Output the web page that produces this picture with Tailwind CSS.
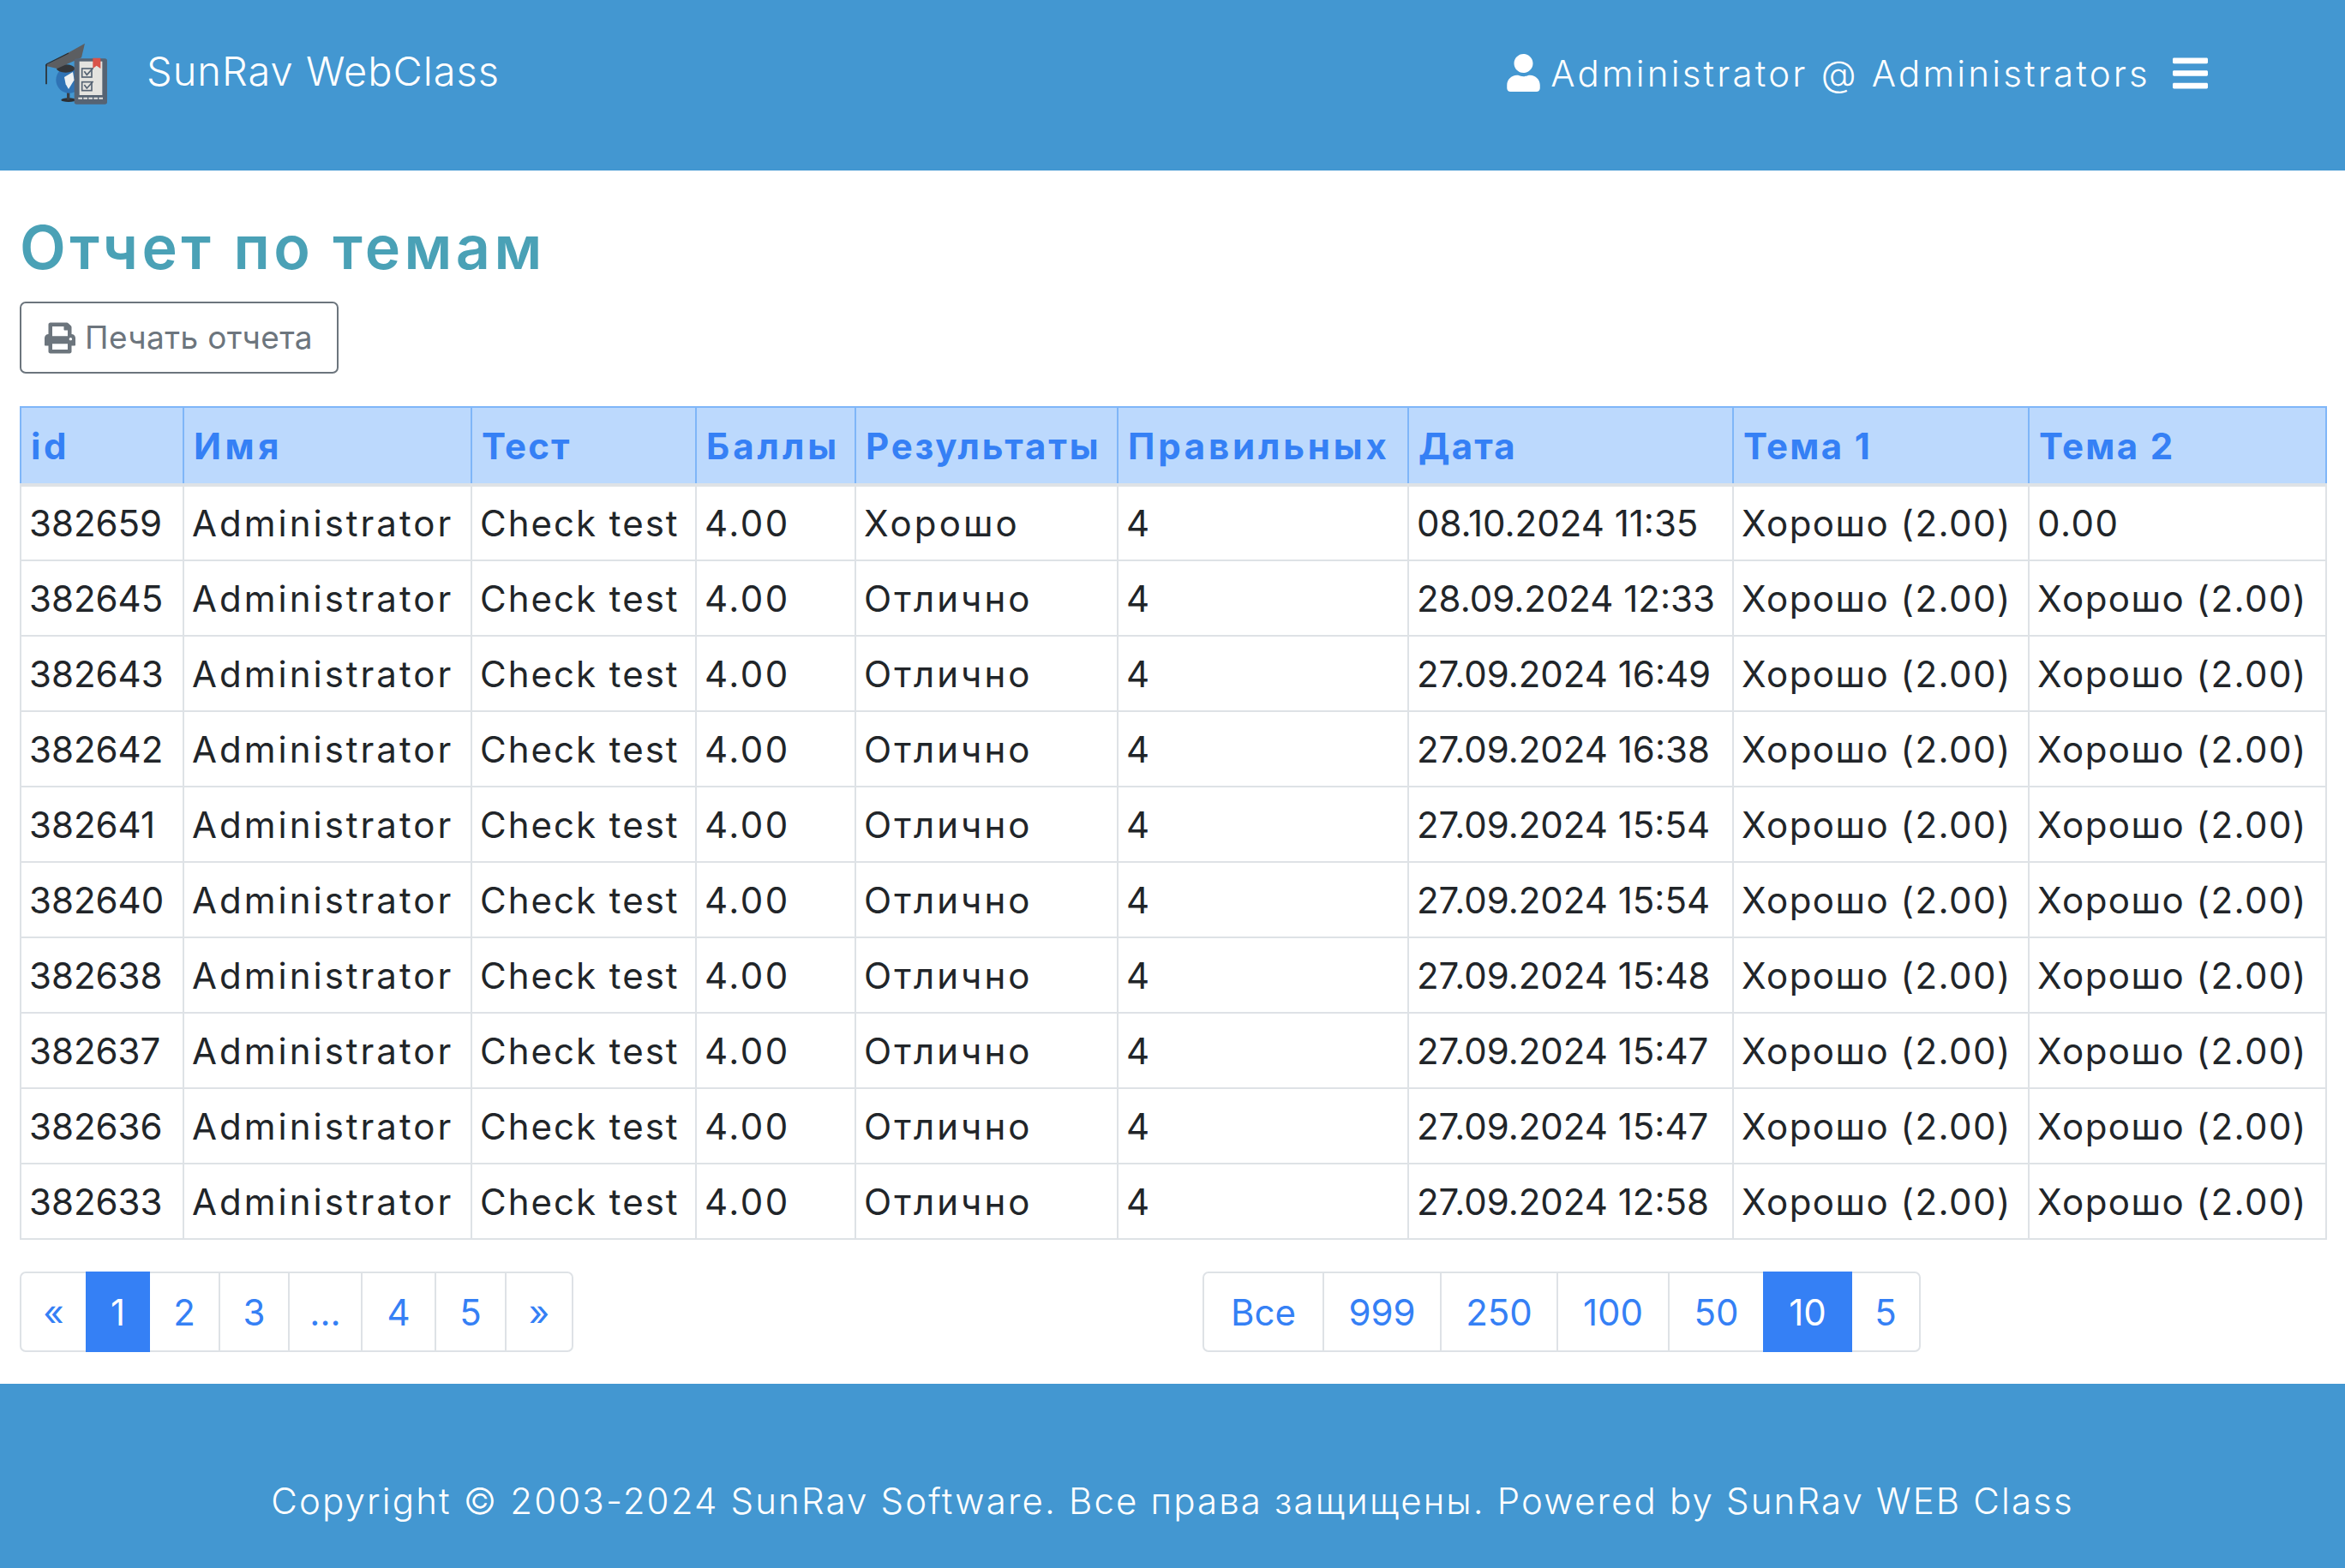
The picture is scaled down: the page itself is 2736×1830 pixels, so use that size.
<!DOCTYPE html>
<html lang="ru"><head><meta charset="utf-8"><title>Отчет по темам</title>
<script src="https://cdn.jsdelivr.net/npm/@tailwindcss/browser@4"></script></head>
<body class="font-['Inter',sans-serif] bg-white text-[#212529] text-[42px]">
<header class="h-[199px] bg-[#4397d1] text-white"><div class="h-[170px] flex items-center pl-[30px] pr-[160px]">
<svg width="120" height="110" viewBox="0 0 360 330"><ellipse cx="150" cy="260" rx="26" ry="7" fill="#2c2f33"/><rect x="144" y="232" width="10" height="28" fill="#3a3f45"/><circle cx="152" cy="190" r="46" fill="#2f73b5"/><path d="M135 180 L165 162 L170 190 L150 222 L140 205 Z" fill="#eef1f2"/><ellipse cx="140" cy="150" rx="32" ry="14" fill="#33363a"/><path d="M68 140 L207 62 L195 112 L110 150 Z" fill="#5c5e61"/><path d="M72 135 L150 96" stroke="#2b2d30" stroke-width="4" fill="none"/><path d="M72 135 V205" stroke="#2b2d30" stroke-width="5"/><rect x="170" y="115" width="115" height="160" rx="8" fill="#566373"/><rect x="188" y="125" width="80" height="118" fill="#e4e3df"/><path d="M235 113 H262 V150 L248 140 L235 150 Z" fill="#d9534a"/><rect x="197" y="150" width="34" height="30" fill="none" stroke="#566373" stroke-width="5"/><path d="M205 160 L214 172 L236 148" fill="none" stroke="#566373" stroke-width="5"/><rect x="197" y="197" width="34" height="30" fill="none" stroke="#566373" stroke-width="5"/><path d="M205 207 L214 219 L236 195" fill="none" stroke="#566373" stroke-width="5"/><path d="M184 254 H198 M202 254 H216 M220 254 H234 M238 254 H252 M256 254 H270" stroke="#e4e3df" stroke-width="6"/></svg>
<span class="ml-[21px] -mt-[3px] text-[47px] font-light tracking-[1px]">SunRav WebClass</span>
<div class="ml-auto flex items-center">
<svg width="39" height="44" viewBox="0 0 448 512" fill="currentColor"><path d="M224 256c70.7 0 128-57.3 128-128S294.7 0 224 0 96 57.3 96 128s57.3 128 128 128zm89.6 32h-16.7c-22.2 10.2-46.9 16-72.9 16s-50.6-5.8-72.9-16h-16.7C60.2 288 0 348.2 0 422.4V464c0 26.5 21.5 48 48 48h352c26.5 0 48-21.5 48-48v-41.6c0-74.2-60.2-134.4-134.4-134.4z"/></svg>
<span class="ml-[12px] font-light tracking-[3.2px]">Administrator @ Administrators</span>
<svg class="ml-[26px]" width="41" height="47" viewBox="0 0 448 512" fill="currentColor"><path d="M16 132h416c8.837 0 16-7.163 16-16V76c0-8.837-7.163-16-16-16H16C7.163 60 0 67.163 0 76v40c0 8.837 7.163 16 16 16zm0 160h416c8.837 0 16-7.163 16-16v-40c0-8.837-7.163-16-16-16H16c-8.837 0-16 7.163-16 16v40c0 8.837 7.163 16 16 16zm0 160h416c8.837 0 16-7.163 16-16v-40c0-8.837-7.163-16-16-16H16c-8.837 0-16 7.163-16 16v40c0 8.837 7.163 16 16 16z"/></svg>
</div></div></header>
<main class="pl-[23px] pr-[20px] pt-[48px] pb-[37px]">
<h1 class="text-[70px] leading-[84px] font-semibold tracking-[4.4px] text-[#4aa1b6] mb-[21px]">Отчет по темам</h1>
<button class="h-[84px] w-[372px] border-2 border-[#6c757d] rounded-[7px] text-[#6c757d] text-[37px] tracking-[0.4px] flex items-center pl-[27px] mb-[38px]">
<svg width="36" height="37" viewBox="0 0 512 512" fill="currentColor"><path d="M448 192V77.25c0-8.49-3.37-16.62-9.37-22.63L393.37 9.37c-6-6-14.14-9.37-22.63-9.37H96C78.33 0 64 14.33 64 32v160c-35.35 0-64 28.65-64 64v112c0 8.84 7.16 16 16 16h48v96c0 17.67 14.33 32 32 32h320c17.67 0 32-14.33 32-32v-96h48c8.84 0 16-7.16 16-16V256c0-35.35-28.65-64-64-64zm-64 256H128v-96h256v96zm0-224H128V64h192v48c0 8.84 7.16 16 16 16h48v96zm48 72c-13.25 0-24-10.75-24-24 0-13.26 10.75-24 24-24s24 10.74 24 24c0 13.25-10.75 24-24 24z"/></svg>
<span class="ml-[11px]">Печать отчета</span></button>
<table class="table-fixed border-collapse w-[2690px] text-left">
<colgroup><col class="w-[190px]"><col class="w-[336px]"><col class="w-[262px]"><col class="w-[186px]"><col class="w-[306px]"><col class="w-[339px]"><col class="w-[379px]"><col class="w-[345px]"><col class="w-[347px]"></colgroup>
<thead><tr class="h-[91px] bg-[#bcd9fd] text-[#3580f5] font-semibold [&>th]:border-2 [&>th]:border-[#7fb6f8] [&>th]:border-b-4 [&>th]:border-b-[#dee2e6] [&>th]:px-[11px]">
<th class="tracking-[3.5px]">id</th><th class="tracking-[4.6px]">Имя</th><th class="tracking-[2.2px]">Тест</th><th class="tracking-[4px]">Баллы</th><th class="tracking-[2.8px]">Результаты</th><th class="tracking-[3.8px]">Правильных</th><th class="tracking-[2.2px]">Дата</th><th class="tracking-[2.3px]">Тема 1</th><th class="tracking-[2.3px]">Тема 2</th></tr></thead>
<tbody class="[&_td]:border-2 [&_td]:border-[#dee2e6] [&_td]:px-[9px] [&_tr]:h-[88px] whitespace-nowrap [&_td:nth-child(2)]:tracking-[3px] [&_td:nth-child(3)]:tracking-[2px] [&_td:nth-child(4)]:tracking-[2.5px] [&_td:nth-child(5)]:tracking-[3.1px] [&_td:nth-child(8)]:tracking-[1.5px] [&_td:nth-child(9)]:tracking-[1.5px]">
<tr><td>382659</td><td>Administrator</td><td>Check test</td><td>4.00</td><td>Хорошо</td><td>4</td><td>08.10.2024 11:35</td><td>Хорошо (2.00)</td><td>0.00</td></tr>
<tr><td>382645</td><td>Administrator</td><td>Check test</td><td>4.00</td><td>Отлично</td><td>4</td><td>28.09.2024 12:33</td><td>Хорошо (2.00)</td><td>Хорошо (2.00)</td></tr>
<tr><td>382643</td><td>Administrator</td><td>Check test</td><td>4.00</td><td>Отлично</td><td>4</td><td>27.09.2024 16:49</td><td>Хорошо (2.00)</td><td>Хорошо (2.00)</td></tr>
<tr><td>382642</td><td>Administrator</td><td>Check test</td><td>4.00</td><td>Отлично</td><td>4</td><td>27.09.2024 16:38</td><td>Хорошо (2.00)</td><td>Хорошо (2.00)</td></tr>
<tr><td>382641</td><td>Administrator</td><td>Check test</td><td>4.00</td><td>Отлично</td><td>4</td><td>27.09.2024 15:54</td><td>Хорошо (2.00)</td><td>Хорошо (2.00)</td></tr>
<tr><td>382640</td><td>Administrator</td><td>Check test</td><td>4.00</td><td>Отлично</td><td>4</td><td>27.09.2024 15:54</td><td>Хорошо (2.00)</td><td>Хорошо (2.00)</td></tr>
<tr><td>382638</td><td>Administrator</td><td>Check test</td><td>4.00</td><td>Отлично</td><td>4</td><td>27.09.2024 15:48</td><td>Хорошо (2.00)</td><td>Хорошо (2.00)</td></tr>
<tr><td>382637</td><td>Administrator</td><td>Check test</td><td>4.00</td><td>Отлично</td><td>4</td><td>27.09.2024 15:47</td><td>Хорошо (2.00)</td><td>Хорошо (2.00)</td></tr>
<tr><td>382636</td><td>Administrator</td><td>Check test</td><td>4.00</td><td>Отлично</td><td>4</td><td>27.09.2024 15:47</td><td>Хорошо (2.00)</td><td>Хорошо (2.00)</td></tr>
<tr><td>382633</td><td>Administrator</td><td>Check test</td><td>4.00</td><td>Отлично</td><td>4</td><td>27.09.2024 12:58</td><td>Хорошо (2.00)</td><td>Хорошо (2.00)</td></tr>
</tbody></table>
<div class="flex mt-[37px] text-[#3580f5] [&_a]:h-[94px] [&_a]:flex [&_a]:items-center [&_a]:justify-center [&_a]:border-2 [&_a]:border-[#dee2e6] [&_a]:-ml-[2px]">
<nav class="flex ml-[2px]">
<a class="w-[79px] rounded-l-[7px]">«</a><a class="w-[75px] !border-[#3580f5] bg-[#3580f5] text-white relative">1</a><a class="w-[84px]">2</a><a class="w-[83px]">3</a><a class="w-[87px]">...</a><a class="w-[88px]">4</a><a class="w-[84px]">5</a><a class="w-[80px] rounded-r-[7px]">»</a>
</nav>
<nav class="flex ml-[736px]">
<a class="w-[142px] rounded-l-[7px]">Все</a><a class="w-[139px]">999</a><a class="w-[138px]">250</a><a class="w-[132px]">100</a><a class="w-[113px]">50</a><a class="w-[104px] !border-[#3580f5] bg-[#3580f5] text-white relative">10</a><a class="w-[82px] rounded-r-[7px]">5</a>
</nav>
</div>
</main>
<footer class="h-[215px] bg-[#4397d1] text-white font-light tracking-[2.15px] flex justify-center pt-[105px]">Copyright © 2003-2024 SunRav Software. Все права защищены. Powered by SunRav WEB Class</footer>
</body></html>
